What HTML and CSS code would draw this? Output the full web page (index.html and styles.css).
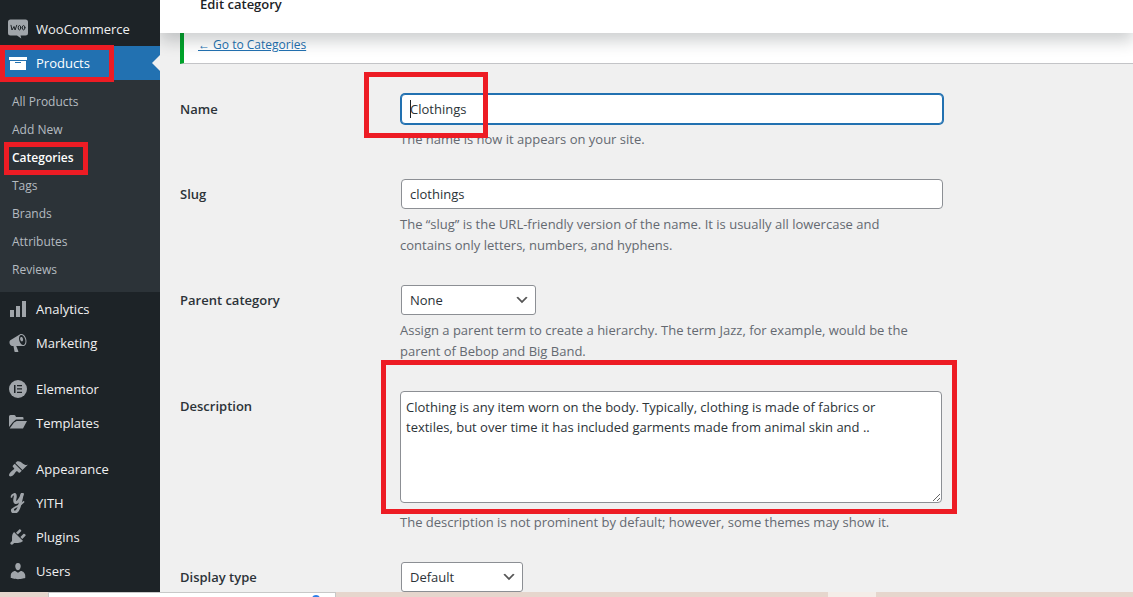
FILE: index.html
```html
<!DOCTYPE html>
<html lang="en">
<head>
<meta charset="utf-8">
<meta name="viewport" content="width=device-width, initial-scale=1">
<title>Edit category</title>
<link rel="stylesheet" href="styles.css">
</head>
<body>
<div class="shell">
  <nav class="sidebar" aria-label="Main menu">
    <a class="menu-item" href="#">
      <svg class="icon" viewBox="0 0 20 20"><path fill="currentColor" d="M2.500 0.500h15a2.500 2.500 0 0 1 2.500 2.500v11a2.500 2.500 0 0 1-2.500 2.500h-5l.8 3-4.300-3H2.500A2.500 2.500 0 0 1 0 14V3A2.500 2.500 0 0 1 2.500.500z"/><g fill="none" stroke="#1d2327" stroke-width="1" stroke-linecap="round" stroke-linejoin="round"><path d="M3 6.300l1 4.700L6 7.500l1.100 3.500L8.700 6.300"/><ellipse cx="11.500" cy="8.700" rx="1.300" ry="2.200"/><ellipse cx="15.600" cy="8.700" rx="1.300" ry="2.200"/></g></svg>
      WooCommerce</a>
    <div class="menu-group">
      <a class="menu-item current" href="#" aria-current="true">
        <svg class="icon" viewBox="0 0 20 20"><path fill="currentColor" d="M1 4h18v3H1z"/><path fill="currentColor" fill-rule="evenodd" d="M2 8h16v9H2zM7 9v1h6V9z"/></svg>
        Products</a>
      <span class="mark mark-products"></span>
    </div>
    <ul class="submenu">
      <li><a href="#">All Products</a></li>
      <li><a href="#">Add New</a></li>
      <li><a class="selected" href="#" aria-current="page">Categories</a><span class="mark mark-categories"></span></li>
      <li><a href="#">Tags</a></li>
      <li><a href="#">Brands</a></li>
      <li><a href="#">Attributes</a></li>
      <li><a href="#">Reviews</a></li>
    </ul>
    <a class="menu-item" href="#">
      <svg class="icon" viewBox="0 0 20 20"><path fill="currentColor" d="M2 11h4v7H2zM8 7h4v11H8zM14 2h4v16h-4z"/></svg>
      Analytics</a>
    <a class="menu-item" href="#">
      <svg class="icon" viewBox="0 0 20 20"><path fill="currentColor" fill-rule="evenodd" d="M18.150 5.940c.460 1.620.380 3.220-.020 4.480-.420 1.280-1.260 2.180-2.300 2.480-.160.060-.260.060-.400.060-.060.020-.120.020-.180.020-.060.020-.140.020-.220.020h-6.800l2.220 5.500c.020.140-.060.260-.140.340-.080.100-.240.160-.340.160H6.950c-.1 0-.260-.060-.340-.160-.080-.080-.160-.200-.140-.340l-1-5.500H4.250l-.020-.020c-.500.060-1.080-.180-1.540-.620s-.880-1.080-1.060-1.880c-.240-.800-.200-1.560-.020-2.200.180-.620.580-1.080 1.060-1.300l.020-.020 9-5.400c.100-.060.180-.100.240-.160.060-.040.140-.080.240-.120.160-.080.280-.120.500-.180 1.040-.300 2.240.100 3.220.980s1.840 2.240 2.260 3.860zm-2.580 5.980h-.020c.400-.100.740-.340 1.040-.700.580-.700.860-1.760.860-3.040 0-.640-.100-1.300-.280-1.980-.340-1.360-1.020-2.500-1.780-3.240s-1.680-1.100-2.460-.880c-.820.220-1.400.960-1.700 2-.320 1.040-.280 2.360.060 3.720.380 1.360 1 2.500 1.800 3.240.780.740 1.620 1.100 2.480.880zm-2.540-7.960c.220-.040.420-.020.620.040.380.160.760.480 1.020 1s.420 1.200.420 1.780c0 .300-.040.560-.120.800-.180.480-.440.840-.860.940-.340.100-.800-.060-1.140-.400s-.640-.860-.780-1.500c-.180-.620-.120-1.240.020-1.720s.480-.840.820-.940z"/></svg>
      Marketing</a>
    <a class="menu-item spaced" href="#">
      <svg class="icon" viewBox="0 0 20 20"><circle cx="10" cy="10" r="9" fill="currentColor"/><path fill="#1d2327" d="M6 6h1.500v8H6zM9 6h5v1.300H9zM9 9.300h5v1.300H9zM9 12.700h5V14H9z"/></svg>
      Elementor</a>
    <a class="menu-item" href="#">
      <svg class="icon" viewBox="0 0 20 20"><path fill="currentColor" d="M1 14V3.500Q1 2 2.500 2h3.700Q7.500 2 8 4h6.500q1 0 1 1v1.500H8L5 9z"/><path fill="currentColor" d="M1.700 15.500L6 9.500l2.600-1.600H19L15 15.500z"/></svg>
      Templates</a>
    <a class="menu-item spaced" href="#">
      <svg class="icon" viewBox="0 0 20 20"><path fill="currentColor" d="M14.480 11.060L7.410 3.990l1.500-1.500c.500-.560 2.300-.470 3.510.320 1.210.800 1.430 1.280 2.910 2.100 1.180.640 2.450 1.260 4.450.850zm-.710.710L6.700 4.700 4.930 6.470c-.390.390-.390 1.020 0 1.410l1.060 1.060c.390.390.390 1.030 0 1.420-.600.600-1.430 1.110-2.210 1.690-.350.260-.700.530-1.010.840C1.430 14.230.400 16.080 1.400 17.070c.990 1 2.840-.030 4.180-1.360.310-.310.580-.660.850-1.020.570-.780 1.080-1.610 1.690-2.210.390-.390 1.020-.390 1.410 0l1.060 1.060c.390.390 1.020.390 1.410 0z"/></svg>
      Appearance</a>
    <a class="menu-item" href="#">
      <svg class="icon" viewBox="0 0 20 20"><g fill="none" stroke="currentColor" stroke-linecap="round" stroke-linejoin="round"><path stroke-width="3" d="M6.800 1.500C8.500 3 5.500 7.500 7.200 9.200 9 10.500 12.500 7 14.200 1.200"/><path stroke-width="3" d="M14.200 1.300C12.500 8 12 14 9.500 17.300 7.500 20 4 19.500 4.500 17"/><path stroke-width="1.700" d="M6.500 1.500C5 1 3.500 2.500 3.500 4M4.500 17c.500-3 7.500-3.500 11-8"/></g></svg>
      YITH</a>
    <a class="menu-item" href="#">
      <svg class="icon" viewBox="0 0 20 20"><path fill="currentColor" d="M13.110 4.360L9.870 7.600 8 5.730l3.240-3.240c.350-.340 1.050-.200 1.560.320.520.510.660 1.210.310 1.550zm-8 1.770l.910-1.120 9.010 9.010-1.190.840c-.710.710-2.630 1.160-3.820 1.160H6.140L4.900 17.260c-.590.590-1.540.590-2.120 0-.590-.580-.590-1.530 0-2.120l1.240-1.240v-3.880c0-1.130.400-3.190 1.090-3.890zm7.260 3.970l3.240-3.240c.340-.350 1.040-.210 1.550.310.520.510.660 1.210.310 1.550l-3.240 3.250z"/></svg>
      Plugins</a>
    <a class="menu-item" href="#">
      <svg class="icon" viewBox="0 0 20 20"><path fill="currentColor" d="M10 9.250c-2.270 0-2.730-3.440-2.730-3.440C7 4.020 7.820 2 9.970 2c2.160 0 2.980 2.020 2.710 3.810 0 0-.410 3.440-2.680 3.440zm0 2.570L12.720 10c2.390 0 4.520 2.330 4.520 4.530v2.490s-3.650 1.130-7.240 1.130c-3.650 0-7.240-1.130-7.240-1.130v-2.490c0-2.250 1.940-4.480 4.470-4.480z"/></svg>
      Users</a>
  </nav>

  <main class="content">
    <header class="page-header"><h1>Edit category</h1></header>
    <div class="notice"><a href="#">← Go to Categories</a></div>
    <form class="term-form">
      <div class="row">
        <label for="name">Name</label>
        <div class="field">
          <div class="control">
            <input class="text active" id="name" type="text" value="Clothings">
            <span class="caret"></span>
            <span class="mark mark-name"></span>
          </div>
          <p>The name is how it appears on your site.</p>
        </div>
      </div>
      <div class="row">
        <label for="slug">Slug</label>
        <div class="field">
          <div class="control"><input class="text" id="slug" type="text" value="clothings"></div>
          <p>The “slug” is the URL-friendly version of the name. It is usually all lowercase and contains only letters, numbers, and hyphens.</p>
        </div>
      </div>
      <div class="row">
        <label for="parent">Parent category</label>
        <div class="field">
          <div class="control"><select class="select-parent" id="parent"><option>None</option></select></div>
          <p>Assign a parent term to create a hierarchy. The term Jazz, for example, would be the parent of Bebop and Big Band.</p>
        </div>
      </div>
      <div class="row">
        <label for="description">Description</label>
        <div class="field">
          <div class="control control-area">
            <textarea id="description">Clothing is any item worn on the body. Typically, clothing is made of fabrics or textiles, but over time it has included garments made from animal skin and ..</textarea>
            <span class="mark mark-description"></span>
          </div>
          <p>The description is not prominent by default; however, some themes may show it.</p>
        </div>
      </div>
      <div class="row">
        <label for="display">Display type</label>
        <div class="field">
          <div class="control"><select class="select-display" id="display"><option>Default</option></select></div>
        </div>
      </div>
    </form>
  </main>
</div>
<footer class="taskbar"><span class="search"><span class="dot"></span></span><span class="task"></span></footer>
</body>
</html>
```
FILE: styles.css
```css
* { box-sizing: border-box; }

body {
  margin: 0;
  min-height: 100vh;
  display: flex;
  flex-direction: column;
  background: #f0f0f0;
  color: #2c3338;
  font: 13px/21px "Segoe UI", "Open Sans", "Noto Sans", sans-serif;
}

.shell {
  flex: 1;
  display: grid;
  grid-template-columns: 160px minmax(0, 1fr);
}

/* Sidebar */
.sidebar {
  padding-top: 12px;
  background: #1d2327;
}

.menu-item {
  display: flex;
  align-items: center;
  gap: 8px;
  height: 34px;
  padding-left: 8px;
  color: #f0f0f1;
  text-decoration: none;
}

.menu-item.spaced { margin-top: 12px; }

.icon {
  flex: none;
  width: 20px;
  height: 20px;
  color: #a0a5aa;
}

.menu-group { position: relative; }

.current {
  position: relative;
  background: #2271b1;
  color: #fff;
}

.current .icon { color: #fff; }

.current::after {
  content: "";
  position: absolute;
  right: 0;
  top: 9px;
  border: 8px solid transparent;
  border-left-width: 0;
  border-right-color: #f0f0f0;
}

.submenu {
  margin: 0;
  padding: 8px 0;
  background: #2c3338;
  list-style: none;
  font-size: 12px;
}

.submenu li { position: relative; }

.submenu a {
  display: block;
  padding: 0 12px;
  color: #b5bbc0;
  line-height: 28px;
  text-decoration: none;
}

.submenu .selected {
  color: #fff;
  font-weight: 600;
}

/* Highlight frames */
.mark {
  position: absolute;
  z-index: 2;
  border: 5px solid #ed1c24;
  pointer-events: none;
}

.mark-products { left: 0; top: -1px; width: 114px; height: 37px; }
.mark-categories { left: 4px; top: -2px; width: 84px; height: 33px; }
.mark-name { left: -36px; top: -22px; width: 124px; height: 66px; }
.mark-description { left: -19px; right: -14px; top: -31px; bottom: -11px; }

/* Content */
.page-header {
  position: relative;
  z-index: 1;
  padding: 0 40px 19px;
  background: #fff;
  box-shadow: 0 8px 16px rgba(29, 35, 39, 0.22);
}

.page-header h1 {
  margin: -6px 0 0;
  color: #1d2327;
  font-size: 13px;
  font-weight: 600;
  line-height: 20px;
}

.content { overflow: hidden; }

.notice {
  margin-left: 20px;
  padding: 1px 14px 8px;
  border-left: 4px solid #00a32a;
  border-bottom: 1px solid #c3c4c7;
  background: #fff;
  font-size: 12px;
}

.notice a { color: #2271b1; }

.term-form {
  display: grid;
  gap: 29px;
  padding: 30px 20px 0;
}

.row {
  display: grid;
  grid-template-columns: 220px minmax(0, 543px);
}

.row > label {
  color: #2c3338;
  font-weight: 600;
  line-height: 30px;
}

.control {
  position: relative;
  display: flex;
  padding-left: 1px;
}

.control-area { padding: 0 1px 0 0; }

.field p {
  margin: 5px 0 0;
  padding-right: 20px;
  color: #646970;
}

.control-area + p { margin-top: 9px; }

input, select, textarea {
  border: 1px solid #8c8f94;
  border-radius: 4px;
  background: #fff;
  color: #2c3338;
  font: inherit;
}

.text {
  width: 100%;
  height: 30px;
  padding: 0 8px;
}

.active {
  border-color: #2271b1;
  box-shadow: 0 0 0 1px #2271b1;
}

.caret {
  position: absolute;
  left: 10px;
  top: 6px;
  width: 1px;
  height: 18px;
  background: #1d2327;
}

textarea {
  display: block;
  width: 100%;
  height: 112px;
  padding: 5px 30px 5px 5px;
  line-height: 20px;
  resize: both;
}

select {
  height: 30px;
  padding: 0 24px 0 8px;
  appearance: none;
  border-radius: 3px;
  background: #fff url("data:image/svg+xml,%3Csvg xmlns='http://www.w3.org/2000/svg' viewBox='0 0 20 20'%3E%3Cpath d='M5 6l5 5 5-5 2 1-7 7-7-7 2-1z' fill='%23555'/%3E%3C/svg%3E") no-repeat right 5px center / 16px 16px;
}

.select-parent { width: 135px; }
.select-display { width: 122px; }

/* Strip along the bottom */
.taskbar {
  display: flex;
  justify-content: space-between;
  height: 5px;
  padding: 0 257px 0 48px;
  background: #e6d6cd;
  overflow: hidden;
}

.search {
  display: flex;
  justify-content: flex-end;
  width: 288px;
  padding: 2px 15px 0 0;
  border: 1px solid #c8c8c8;
  border-bottom: 0;
  background: #fff;
}

.dot {
  flex: none;
  width: 8px;
  height: 8px;
  border-radius: 4px;
  background: #2b7de9;
}

.task {
  width: 48px;
  background: #f4ede8;
}
```
